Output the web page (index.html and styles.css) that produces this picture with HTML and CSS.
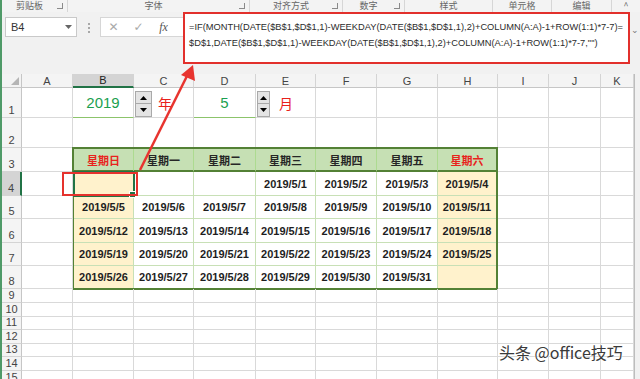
FILE: index.html
```html
<!DOCTYPE html>
<html lang="zh-CN">
<head>
  <meta charset="UTF-8">
  <meta name="viewport" content="width=device-width, initial-scale=1.0">
  <title>万年历 - Excel</title>
  <link rel="stylesheet" href="styles.css">
</head>
<body>
  <div class="window">

    <!-- Ribbon group labels -->
    <div class="ribbon">
      <div class="group g-clip"><span class="group-name">剪贴板</span><span class="launch"></span></div>
      <div class="group g-font"><span class="group-name">字体</span><span class="launch"></span></div>
      <div class="group g-align"><span class="group-name">对齐方式</span><span class="launch"></span></div>
      <div class="group g-num"><span class="group-name">数字</span><span class="launch"></span></div>
      <div class="group g-style"><span class="group-name">样式</span></div>
      <div class="group g-cell"><span class="group-name">单元格</span></div>
      <div class="group g-edit"><span class="group-name">编辑</span></div>
      <div class="group g-more"><span class="group-name">^</span></div>
    </div>

    <!-- Formula bar -->
    <div class="fbar">
      <div class="namebox">B4
        <svg width="7" height="4" viewBox="0 0 7 4"><path d="M0 0H7L3.5 4Z" fill="#666"/></svg>
      </div>
      <div class="grip"><span></span><span></span><span></span></div>
      <div class="fx-btns">
        <span class="btn-x">✕</span>
        <span class="btn-ok">✓</span>
        <span class="btn-fx">fx</span>
      </div>
      <div class="formula">=IF(MONTH(DATE($B$1,$D$1,1)-WEEKDAY(DATE($B$1,$D$1,1),2)+COLUMN(A:A)-1+ROW(1:1)*7-7)=
$D$1,DATE($B$1,$D$1,1)-WEEKDAY(DATE($B$1,$D$1,1),2)+COLUMN(A:A)-1+ROW(1:1)*7-7,"")</div>
      <div class="fbar-end">⌄</div>
    </div>

    <!-- Worksheet -->
    <div class="sheet">
      <div class="grid">
        <div class="corner"><span class="tri"></span></div>
        <div class="ch">A</div><div class="ch active">B</div><div class="ch">C</div><div class="ch">D</div><div class="ch">E</div><div class="ch">F</div><div class="ch">G</div><div class="ch">H</div><div class="ch">I</div><div class="ch">J</div><div class="ch">K</div>

        <div class="rh">1</div><div class="c"></div>
        <div class="c val">2019</div>
        <div class="c unit">
          <span class="spin"><span><svg width="7" height="4" viewBox="0 0 7 4"><path d="M0 4L3.5 0L7 4Z"/></svg></span><span><svg width="7" height="4" viewBox="0 0 7 4"><path d="M0 0H7L3.5 4Z"/></svg></span></span>年
        </div>
        <div class="c val">5</div>
        <div class="c unit">
          <span class="spin narrow"><span><svg width="7" height="4" viewBox="0 0 7 4"><path d="M0 4L3.5 0L7 4Z"/></svg></span><span><svg width="7" height="4" viewBox="0 0 7 4"><path d="M0 0H7L3.5 4Z"/></svg></span></span>月
        </div>
        <div class="c"></div><div class="c"></div><div class="c"></div><div class="c"></div><div class="c"></div><div class="c"></div>

        <div class="rh">2</div><div class="c"></div><div class="c"></div><div class="c"></div><div class="c"></div><div class="c"></div><div class="c"></div><div class="c"></div><div class="c"></div><div class="c"></div><div class="c"></div><div class="c"></div>

        <div class="rh">3</div><div class="c"></div>
        <!-- Calendar block B3:H8 -->
        <div class="cal">
          <div class="day red">星期日</div><div class="day">星期一</div><div class="day">星期二</div><div class="day">星期三</div><div class="day">星期四</div><div class="day">星期五</div><div class="day red">星期六</div>

          <div class="d wk sel"></div><div class="d"></div><div class="d"></div><div class="d">2019/5/1</div><div class="d">2019/5/2</div><div class="d">2019/5/3</div><div class="d wk">2019/5/4</div>
          <div class="d wk">2019/5/5</div><div class="d">2019/5/6</div><div class="d">2019/5/7</div><div class="d">2019/5/8</div><div class="d">2019/5/9</div><div class="d">2019/5/10</div><div class="d wk">2019/5/11</div>
          <div class="d wk">2019/5/12</div><div class="d">2019/5/13</div><div class="d">2019/5/14</div><div class="d">2019/5/15</div><div class="d">2019/5/16</div><div class="d">2019/5/17</div><div class="d wk">2019/5/18</div>
          <div class="d wk">2019/5/19</div><div class="d">2019/5/20</div><div class="d">2019/5/21</div><div class="d">2019/5/22</div><div class="d">2019/5/23</div><div class="d">2019/5/24</div><div class="d wk">2019/5/25</div>
          <div class="d wk">2019/5/26</div><div class="d">2019/5/27</div><div class="d">2019/5/28</div><div class="d">2019/5/29</div><div class="d">2019/5/30</div><div class="d">2019/5/31</div><div class="d wk"></div>
        </div>
        <div class="c"></div><div class="c"></div><div class="c"></div>

        <div class="rh active">4</div><div class="c"></div><div class="c"></div><div class="c"></div><div class="c"></div>
        <div class="rh">5</div><div class="c"></div><div class="c"></div><div class="c"></div><div class="c"></div>
        <div class="rh">6</div><div class="c"></div><div class="c"></div><div class="c"></div><div class="c"></div>
        <div class="rh">7</div><div class="c"></div><div class="c"></div><div class="c"></div><div class="c"></div>
        <div class="rh">8</div><div class="c"></div><div class="c"></div><div class="c"></div><div class="c"></div>

        <div class="rh">9</div><div class="c"></div><div class="c"></div><div class="c"></div><div class="c"></div><div class="c"></div><div class="c"></div><div class="c"></div><div class="c"></div><div class="c"></div><div class="c"></div><div class="c"></div>
        <div class="rh">10</div><div class="c"></div><div class="c"></div><div class="c"></div><div class="c"></div><div class="c"></div><div class="c"></div><div class="c"></div><div class="c"></div><div class="c"></div><div class="c"></div><div class="c"></div>
        <div class="rh">11</div><div class="c"></div><div class="c"></div><div class="c"></div><div class="c"></div><div class="c"></div><div class="c"></div><div class="c"></div><div class="c"></div><div class="c"></div><div class="c"></div><div class="c"></div>
        <div class="rh">12</div><div class="c"></div><div class="c"></div><div class="c"></div><div class="c"></div><div class="c"></div><div class="c"></div><div class="c"></div><div class="c"></div><div class="c"></div><div class="c"></div><div class="c"></div>
        <div class="rh">13</div><div class="c"></div><div class="c"></div><div class="c"></div><div class="c"></div><div class="c"></div><div class="c"></div><div class="c"></div><div class="c"></div><div class="c"></div><div class="c"></div><div class="c"></div>
        <div class="rh">14</div><div class="c"></div><div class="c"></div><div class="c"></div><div class="c"></div><div class="c"></div><div class="c"></div><div class="c"></div><div class="c"></div><div class="c"></div><div class="c"></div><div class="c"></div>
        <div class="rh">15</div><div class="c"></div><div class="c"></div><div class="c"></div><div class="c"></div><div class="c"></div><div class="c"></div><div class="c"></div><div class="c"></div><div class="c"></div><div class="c"></div><div class="c"></div>
      </div>
      <div class="vscroll"></div>
    </div>

    <!-- Annotations drawn over the sheet -->
    <div class="mark"></div>
    <svg class="arrow" width="640" height="379" viewBox="0 0 640 379">
      <line x1="140" y1="170" x2="187" y2="76" stroke="#e8342f" stroke-width="2.5"/>
      <polygon points="193,65 181,75 195,81" fill="#e8342f"/>
    </svg>
    <div class="watermark">头条 @office技巧</div>
  </div>
</body>
</html>
```

FILE: styles.css
```css
/* Base */
* {
  box-sizing: border-box;
}

body {
  margin: 0;
  background: #fff;
  font-family: "Liberation Sans", Arial, "Noto Sans CJK SC", sans-serif;
}

.window {
  position: relative;
  width: 640px;
  height: 379px;
  overflow: hidden;
  background: #fff;
  border-left: 2px solid #4f9a68;
}

/* Ribbon labels */
.ribbon {
  display: flex;
  height: 12px;
  background: #f3f3f3;
  color: #666;
  font: 9px/12px "Noto Sans CJK SC", sans-serif;
}

.group {
  display: flex;
  align-items: flex-start;
  border-right: 1px solid #d6d6d6;
}

.group-name {
  flex: 1;
  text-align: center;
}

.launch {
  width: 6px;
  height: 6px;
  margin: 3px 4px 0 0;
  border-right: 1px solid #8a8a8a;
  border-bottom: 1px solid #8a8a8a;
}

.g-clip { width: 66px; }
.g-font { width: 182px; }
.g-align { width: 93px; }
.g-num { width: 62px; }
.g-style { width: 88px; }
.g-cell { width: 59px; }
.g-edit { width: 60px; }
.g-more { flex: 1; border-right: none; }

/* Formula bar */
.fbar {
  display: flex;
  align-items: flex-start;
  height: 62px;
  background: #f1f1f1;
}

.namebox {
  display: flex;
  align-items: center;
  justify-content: space-between;
  width: 72px;
  height: 20px;
  margin: 5px 0 0 3px;
  padding: 0 4px 0 5px;
  background: #fff;
  border: 1px solid #c9c9c9;
  font-size: 11px;
  color: #333;
}

.grip {
  display: flex;
  flex-direction: column;
  align-items: center;
  gap: 2px;
  width: 23px;
  margin-top: 11px;
}

.grip span {
  width: 2px;
  height: 2px;
  background: #a8a8a8;
}

.fx-btns {
  display: flex;
  align-items: center;
  width: 83px;
  height: 20px;
  margin-top: 5px;
  background: #fff;
  border: 1px solid #d6d6d6;
  border-right: none;
}

.fx-btns span {
  width: 25px;
  text-align: center;
  color: #a9a9a9;
  font: 12px "DejaVu Sans", sans-serif;
}

.fx-btns .btn-fx {
  color: #555;
  font: italic 12px "Liberation Serif", serif;
}

.formula {
  width: 447px;
  height: 52px;
  padding: 5px 0 0 4px;
  background: #fff;
  border: 2px solid #e2302c;
  color: #2b2b2b;
  font-size: 9.3px;
  line-height: 16px;
  white-space: pre;
  overflow: hidden;
}

.fbar-end {
  flex: 1;
  text-align: center;
  color: #777;
  font-size: 9px;
  margin-top: 13px;
}

/* Worksheet grid */
.sheet {
  display: flex;
}

.grid {
  display: grid;
  grid-template-columns: 20px 51px 61px 60px 62px 60px 61px 61px 60px 51px 52px 33px;
  grid-template-rows: 14px 30px 30px 24px 24px 23px 24px 23px 23px 14px 14px 13px 14px 13px 14px 14px;
  font-size: 11px;
  color: #333;
}

.c {
  border-right: 1px solid #d9d9d9;
  border-bottom: 1px solid #d9d9d9;
}

.corner {
  display: flex;
  align-items: flex-end;
  justify-content: flex-end;
  padding: 0 2px 2px 0;
  background: #f3f3f3;
  border-right: 1px solid #c6c6c6;
  border-bottom: 1px solid #c6c6c6;
}

.tri {
  width: 0;
  height: 0;
  border-left: 8px solid transparent;
  border-bottom: 8px solid #b5b5b5;
}

.ch {
  display: flex;
  align-items: center;
  justify-content: center;
  background: #f4f4f4;
  border-right: 1px solid #d4d4d4;
  border-bottom: 1px solid #c6c6c6;
  color: #444;
}

.ch.active {
  background: #d4d4d4;
  border-bottom: 2px solid #217346;
  color: #222;
}

.rh {
  display: flex;
  align-items: flex-end;
  justify-content: center;
  background: #f4f4f4;
  border-right: 1px solid #c6c6c6;
  border-bottom: 1px solid #d4d4d4;
  color: #444;
  font-size: 11px;
  line-height: 13px;
}

.rh.active {
  background: #d4d4d4;
  border-right: 2px solid #217346;
}

/* Row 1: year / month inputs */
.val {
  display: flex;
  align-items: center;
  justify-content: center;
  color: #1b9f50;
  font-size: 15px;
  border-bottom-color: #8cc46b;
}

.unit {
  display: flex;
  align-items: center;
  color: #e8211c;
  font: 14px "Noto Sans CJK SC", sans-serif;
}

.spin {
  display: flex;
  flex-direction: column;
  margin: 3px 6px 0 1px;
}

.spin span {
  display: flex;
  align-items: center;
  justify-content: center;
  width: 17px;
  height: 13px;
  background: #e4e4e4;
  border: 1px solid #a9a9a9;
}

.spin span + span {
  border-top: none;
}

.spin.narrow {
  margin-right: 9px;
}

.spin.narrow span {
  width: 13px;
}

/* Calendar block */
.cal {
  grid-column: 3 / 10;
  grid-row: 4 / 10;
  margin: -1px 0 -1px -1px;
  display: grid;
  grid-template-columns: 60px 60px 62px 60px 61px 61px 1fr;
  grid-template-rows: 23px 24px 23px 24px 23px 1fr;
  border: 2px solid #538135;
  background: #fff;
  color: #1e1e1e;
  font-weight: bold;
  font-size: 11px;
}

.cal > div {
  display: flex;
  align-items: center;
  justify-content: center;
  border-right: 1px solid #c8e0b6;
  border-bottom: 1px solid #c8e0b6;
}

.cal > div:nth-child(7n) {
  border-right: none;
}

.cal > div:nth-last-child(-n+7) {
  border-bottom: none;
}

.cal .day {
  background: #c6e0b4;
  border-right-color: #addb90;
  border-bottom: 2px solid #538135;
  font-family: "Noto Sans CJK SC", sans-serif;
  color: #262626;
}

.cal .day.red {
  color: #e8231d;
}

.cal .wk {
  background: #fff2cc;
}

.cal .sel {
  position: relative;
  z-index: 1;
  outline: 2px solid #217346;
  outline-offset: -1px;
}

.cal .sel::after {
  content: "";
  position: absolute;
  right: -3px;
  bottom: -3px;
  width: 5px;
  height: 5px;
  background: #217346;
  border: 1px solid #fff;
}

.vscroll {
  flex: 1;
  background: #f1f1f1;
  border-left: 1px solid #bdbdbd;
}

/* Annotations */
.mark {
  position: absolute;
  left: 60px;
  top: 172px;
  width: 76px;
  height: 24px;
  border: 2px solid #e5322d;
  z-index: 2;
}

.arrow {
  position: absolute;
  left: -2px;
  top: 0;
  pointer-events: none;
  z-index: 3;
}

.watermark {
  position: absolute;
  left: 497px;
  top: 340px;
  color: #3a3a3a;
  font: 16px "Noto Sans CJK SC", sans-serif;
  text-shadow: 0 0 2px #fff, 0 0 1px #fff;
}
```
